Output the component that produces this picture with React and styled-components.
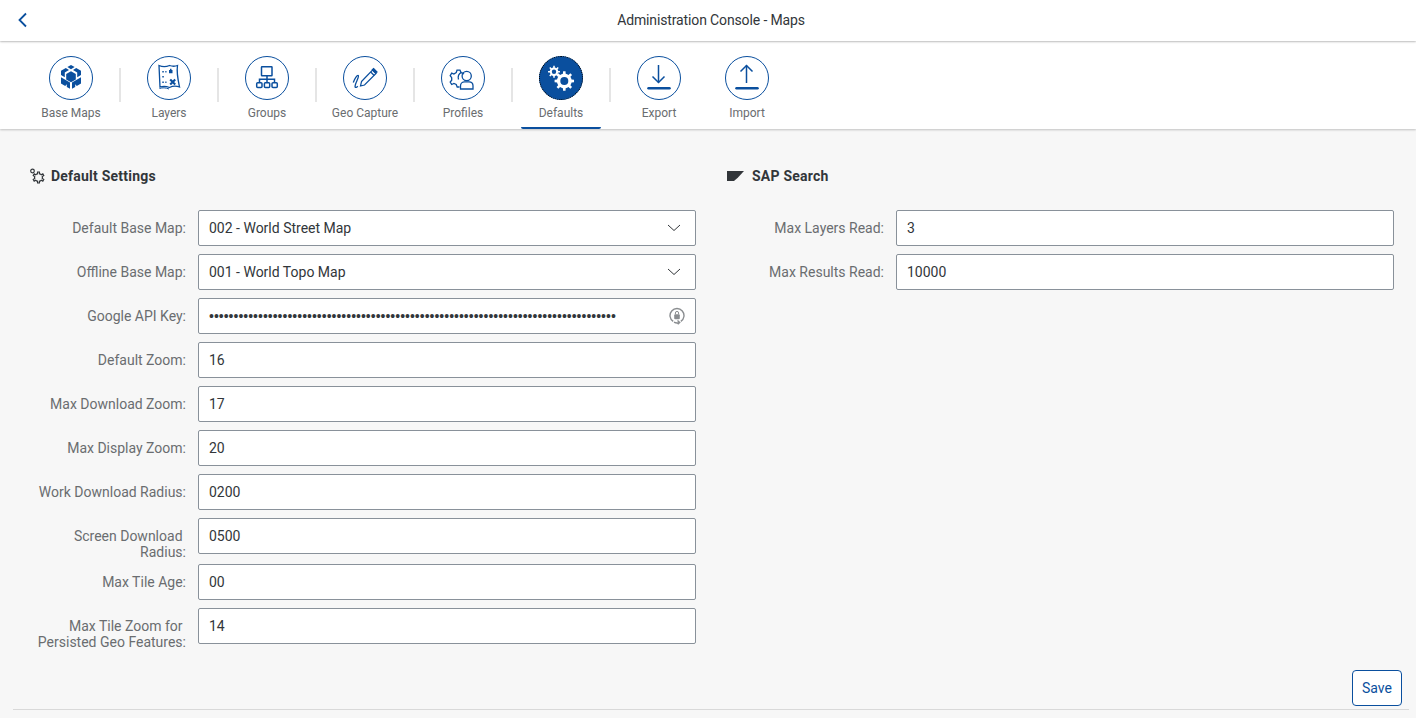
import React from 'react';
import styled, { createGlobalStyle } from 'styled-components';

const BLUE = '#0a4f9e';
const FONT = 'Roboto, "Open Sans", sans-serif';

const GlobalStyle = createGlobalStyle`
  html, body {
    margin: 0;
    height: 100%;
    background: #f7f7f7;
    font-family: ${FONT};
    font-size: 14px;
    color: #32363a;
  }
  * {
    box-sizing: border-box;
  }
`;

const Page = styled.div`
  width: 1416px;
  height: 718px;
  display: flex;
  flex-direction: column;
  overflow: hidden;
`;

const Header = styled.header`
  height: 41px;
  flex: none;
  display: flex;
  align-items: center;
  justify-content: center;
  padding: 0 0 2px 6px;
  background: #fff;
  position: relative;
  z-index: 2;
  box-shadow: 0 1px 2px rgba(0, 0, 0, 0.22);
`;

const BackButton = styled.button`
  position: absolute;
  left: 17px;
  top: 12px;
  width: 12px;
  height: 16px;
  padding: 0;
  border: none;
  background: none;
  color: ${BLUE};
  cursor: pointer;
`;

const PageTitle = styled.div`
  font-size: 14px;
  letter-spacing: -0.13px;
  color: #32363a;
`;

const TabBar = styled.nav`
  height: 87px;
  margin-top: 1px;
  flex: none;
  display: flex;
  gap: 8px;
  padding-left: 31px;
  background: #fff;
  box-shadow: 0 1px 2px rgba(0, 0, 0, 0.22);
`;

const Tab = styled.div`
  width: 80px;
  display: flex;
  flex-direction: column;
  align-items: center;
  padding-top: 14px;
  border-bottom: 2px solid ${(p) => (p.$active ? BLUE : 'transparent')};
  border-radius: 0 0 2px 2px;
`;

const TabCircle = styled.div`
  width: 44px;
  height: 44px;
  flex: none;
  border-radius: 50%;
  border: 1px solid ${BLUE};
  background: ${(p) => (p.$active ? BLUE : '#fff')};
  color: ${(p) => (p.$active ? '#fff' : BLUE)};
  outline: ${(p) => (p.$active ? '1px dotted #000' : 'none')};
  outline-offset: -1px;
  display: flex;
  align-items: center;
  justify-content: center;
`;

const TabLabel = styled.div`
  margin-top: 5px;
  font-size: 12px;
  line-height: 16px;
  color: #6a6d70;
  white-space: nowrap;
`;

const TabDivider = styled.div`
  width: 2px;
  height: 34px;
  margin-top: 26px;
  background: #e5e5e5;
`;

const Content = styled.main`
  flex: 1;
  display: flex;
  flex-direction: column;
  padding-top: 37px;
`;

const Columns = styled.div`
  display: grid;
  grid-template-columns: 660px 660px;
  column-gap: 38px;
  padding-left: 36px;
`;

const SectionTitle = styled.h2`
  margin: 0 0 24px -7px;
  height: 20px;
  display: flex;
  align-items: center;
  gap: ${(p) => p.$gap}px;
  font-size: 14px;
  font-weight: 700;
  letter-spacing: 0.22px;
  color: #32363a;
`;

const Form = styled.div`
  display: flex;
  flex-direction: column;
  gap: 4px;
`;

const Row = styled.div`
  display: grid;
  grid-template-columns: 150px 498px;
  column-gap: 12px;
`;

const Label = styled.label`
  padding-top: 10px;
  font-size: 14px;
  line-height: 16px;
  text-align: right;
  color: #6a6d70;
`;

const Field = styled.div`
  height: 36px;
  margin-bottom: 4px;
  padding: 0 10px;
  display: flex;
  align-items: center;
  justify-content: space-between;
  background: #fff;
  border: 1px solid #89919a;
  border-radius: 2px;
  color: #32363a;
`;

const FieldText = styled.span`
  white-space: nowrap;
`;

const Dots = styled.span`
  font-size: 14px;
  white-space: nowrap;
  overflow: hidden;
  font-family: "Liberation Sans", sans-serif;
`;

const ChevronSvg = styled.svg`
  margin-right: 4px;
`;

const Footer = styled.div`
  flex: 1;
  display: flex;
  justify-content: flex-end;
  align-items: flex-start;
  padding: 20px 14px 0 0;
`;

const SaveButton = styled.button`
  width: 50px;
  height: 36px;
  padding: 0;
  background: #fff;
  border: 1px solid ${BLUE};
  border-radius: 4px;
  color: ${BLUE};
  font-family: ${FONT};
  font-size: 14px;
  cursor: pointer;
`;

const BottomRule = styled.div`
  height: 1px;
  margin: 0 7px 8px 13px;
  background: #d9d9d9;
  flex: none;
`;

// outline of a cog with a round hole, used by the Defaults icons
const gearPath = (cx, cy, outer, inner, hole, teeth) => {
  const pts = [];
  const step = (Math.PI * 2) / teeth;
  for (let i = 0; i < teeth; i++) {
    const a = i * step - Math.PI / 2;
    [[-0.5, inner], [-0.24, inner], [-0.16, outer], [0.16, outer], [0.24, inner]].forEach(([o, r]) => {
      const t = a + o * step;
      pts.push(`${(cx + Math.cos(t) * r).toFixed(2)} ${(cy + Math.sin(t) * r).toFixed(2)}`);
    });
  }
  const ring = hole
    ? ` M${cx - hole} ${cy}a${hole} ${hole} 0 1 0 ${hole * 2} 0a${hole} ${hole} 0 1 0 ${-hole * 2} 0z`
    : '';
  return `M${pts.join('L')}z${ring}`;
};

const TabIcon = ({ children, ...rest }) => (
  <svg width="42" height="42" viewBox="1 1 42 42" fill="none" stroke="currentColor" {...rest}>
    {children}
  </svg>
);

const BaseMapsIcon = () => (
  <TabIcon fill="currentColor" stroke="none">
    <path d="M22 9l3.600 2.100-3.600 2.100-3.600-2.100z" />
    <path d="M16.800 12l3.200 1.900-4.200 2.500v4.800l-3.800-2.200v-4.300z" />
    <path d="M27.200 12l-3.200 1.900 4.200 2.500v4.800l3.800-2.200v-4.300z" />
    <path d="M22 15.200l4.800 2.800v5.400L22 26.200l-4.800-2.800V18z" />
    <path d="M12 21.200l4.300 2.500 4.700 2.800v6.300l-3.200-1.900v-2.700l-1.600 1.700-4.200-2.500z" />
    <path d="M32 21.200l-4.300 2.500-4.700 2.800v6.300l3.200-1.900v-2.700l1.600 1.700 4.200-2.500z" />
  </TabIcon>
);

const LayersIcon = () => (
  <TabIcon>
    <path d="M12 9.500c3.500 1.500 7 1.500 10.500 0 3 1 5.500 1 8 0-.8 5-.3 11 2 21.500-3.500-1.200-7-1-10 .5-3.500-1.500-6.500-1.500-9.500-.5z" strokeWidth="1.300" />
    <path d="M12.500 32.500c3-1 6-1 9.500.5" strokeWidth="1" />
    <path d="M15.300 15.700h1.500M18.300 15.700h1.200M15.300 20.700h1.500M15.300 26.300h1.500M18.300 26.300h1.200" strokeWidth="1.600" />
    <path d="M23 12.800h1.500v1.200h1v3.200h-3.500V14h1z" fill="currentColor" stroke="none" />
    <path d="M23.200 23.500l5 5M28.200 23.500l-5 5" strokeWidth="2.100" />
  </TabIcon>
);

const GroupsIcon = () => (
  <TabIcon strokeWidth="1.500">
    <rect x="16.500" y="10.700" width="10.500" height="9" rx="0.500" />
    <path d="M22 19.700v7M14.500 26.700v-3.400h15v3.400" />
    <rect x="11.700" y="26.700" width="5.300" height="4.800" rx="1" />
    <rect x="19.400" y="26.700" width="5.300" height="4.800" rx="1" />
    <rect x="27" y="26.700" width="5.300" height="4.800" rx="1" />
  </TabIcon>
);

const GeoCaptureIcon = () => (
  <TabIcon strokeWidth="1.200">
    <path d="M10.300 26.500c1.300-3.700 3.700-7.500 5-7 1.500.8-3.800 8.500-3.200 11.300.3 1.300 1.800.4 2.700-.6" strokeWidth="1.300" />
    <path d="M18.500 25.500L29.500 14l3.500 3.500L21.500 29l-4 1z" />
    <path d="M27.700 16l3.500 3.500" />
    <path d="M30.500 12.500l3.500 3.500-1.200 1.200-3.500-3.500z" fill="currentColor" />
  </TabIcon>
);

const ProfilesIcon = () => (
  <TabIcon strokeWidth="1.300">
    <path d="M18.500 31h-2.300l-1-2.500-2.300-1-2.200 1-1.500-2.400 1.500-1.900v-2.600l-1.500-2 1.500-2.500 2.200 1 2.300-1.500.8-2.400h3l1 2.400c1.200.2 2.300.8 3 1.500" />
    <path d="M20.500 16.300c-2.800 1-4 4.300-3 7.200" />
    <circle cx="25.700" cy="20" r="4.600" />
    <path d="M19.500 33v-3.200c0-2.500 2-4 4-4h4.500c2.200 0 4 1.500 4 4V33z" />
  </TabIcon>
);

const DefaultsIcon = () => (
  <TabIcon fill="currentColor" stroke="none" fillRule="evenodd">
    <path d={gearPath(15, 15.7, 6, 4.300, 2.200, 8)} />
    <path d={gearPath(25.300, 25, 9.800, 7.400, 4, 8)} />
  </TabIcon>
);

const ExportIcon = () => (
  <TabIcon>
    <path d="M21.500 9v17.500" strokeWidth="1.500" />
    <path d="M15.500 20.500l6 6 6-6" strokeWidth="1.500" />
    <path d="M11.500 32.300h21" strokeWidth="2.500" strokeLinecap="round" />
  </TabIcon>
);

const ImportIcon = () => (
  <TabIcon>
    <path d="M21.500 27V9.500" strokeWidth="1.500" />
    <path d="M15.500 15.500l6-6 6 6" strokeWidth="1.500" />
    <path d="M11.500 32.300h21" strokeWidth="2.500" strokeLinecap="round" />
  </TabIcon>
);

const Chevron = () => (
  <ChevronSvg width="14" height="8" viewBox="0 0 14 8" fill="none" stroke="#32363a" strokeWidth="1">
    <path d="M1 1l6 5.500 6-5.500" />
  </ChevronSvg>
);

const PasswordIcon = () => (
  <svg width="16" height="18" viewBox="0 0 16 18" fill="none" stroke="#8a8d90" strokeWidth="1.400">
    <path d="M4.200 14.400A7 7 0 1 1 11.800 14.400" />
    <path d="M5 15.200a6.800 6.800 0 0 0 5.500 .3M8.500 13.500l2.200 2-2 1.800" />
    <rect x="5.200" y="7.200" width="5.600" height="5" rx="1" fill="#8a8d90" stroke="none" />
    <path d="M6.400 7.200V6a1.600 1.600 0 0 1 3.200 0v1.200" strokeWidth="1" />
  </svg>
);

const SettingsGlyph = () => (
  <svg width="16" height="16" viewBox="0 0 16 16" fill="none" stroke="#32363a" strokeWidth="1.200">
    <circle cx="3.500" cy="3" r="1.800" />
    <path d={gearPath(9.500, 9.500, 5.600, 3.900, 0, 6)} />
  </svg>
);

const TagGlyph = () => (
  <svg width="17" height="10" viewBox="0 0 17 10" fill="#32363a">
    <path d="M0 0h17l-6 6.500-4 3.500H0z" />
  </svg>
);

const tabs = [
  { label: 'Base Maps', icon: <BaseMapsIcon />, divider: true },
  { label: 'Layers', icon: <LayersIcon />, divider: true },
  { label: 'Groups', icon: <GroupsIcon />, divider: true },
  { label: 'Geo Capture', icon: <GeoCaptureIcon />, divider: true },
  { label: 'Profiles', icon: <ProfilesIcon />, divider: true },
  { label: 'Defaults', icon: <DefaultsIcon />, divider: true, active: true },
  { label: 'Export', icon: <ExportIcon /> },
  { label: 'Import', icon: <ImportIcon /> },
];

const settings = [
  { label: 'Default Base Map:', value: '002 - World Street Map', icon: <Chevron /> },
  { label: 'Offline Base Map:', value: '001 - World Topo Map', icon: <Chevron /> },
  { label: 'Google API Key:', password: true, icon: <PasswordIcon /> },
  { label: 'Default Zoom:', value: '16' },
  { label: 'Max Download Zoom:', value: '17' },
  { label: 'Max Display Zoom:', value: '20' },
  { label: 'Work Download Radius:', value: '0200' },
  { label: <>Screen Download&nbsp;<br />Radius:</>, value: '0500' },
  { label: 'Max Tile Age:', value: '00' },
  { label: <>Max Tile Zoom for&nbsp;<br />Persisted Geo Features:</>, value: '14' },
];

const search = [
  { label: 'Max Layers Read:', value: '3' },
  { label: 'Max Results Read:', value: '10000' },
];

const renderRow = (row, i) => (
  <Row key={i}>
    <Label>{row.label}</Label>
    <Field>
      {row.password ? <Dots>{'•'.repeat(83)}</Dots> : <FieldText>{row.value}</FieldText>}
      {row.icon}
    </Field>
  </Row>
);

const App = () => (
  <Page>
    <GlobalStyle />
    <Header>
      <BackButton aria-label="Back">
        <svg width="12" height="16" viewBox="0 0 12 16" fill="none" stroke="currentColor" strokeWidth="1.800">
          <path d="M9 1.500L2.500 8 9 14.500" />
        </svg>
      </BackButton>
      <PageTitle>Administration Console - Maps</PageTitle>
    </Header>
    <TabBar>
      {tabs.map((tab) => (
        <React.Fragment key={tab.label}>
          <Tab $active={tab.active}>
            <TabCircle $active={tab.active}>{tab.icon}</TabCircle>
            <TabLabel>{tab.label}</TabLabel>
          </Tab>
          {tab.divider && <TabDivider />}
        </React.Fragment>
      ))}
    </TabBar>
    <Content>
      <Columns>
        <div>
          <SectionTitle $gap={6}><SettingsGlyph />Default Settings</SectionTitle>
          <Form>{settings.map(renderRow)}</Form>
        </div>
        <div>
          <SectionTitle $gap={8}><TagGlyph />SAP Search</SectionTitle>
          <Form>{search.map(renderRow)}</Form>
        </div>
      </Columns>
      <Footer>
        <SaveButton>Save</SaveButton>
      </Footer>
      <BottomRule />
    </Content>
  </Page>
);

export default App;
